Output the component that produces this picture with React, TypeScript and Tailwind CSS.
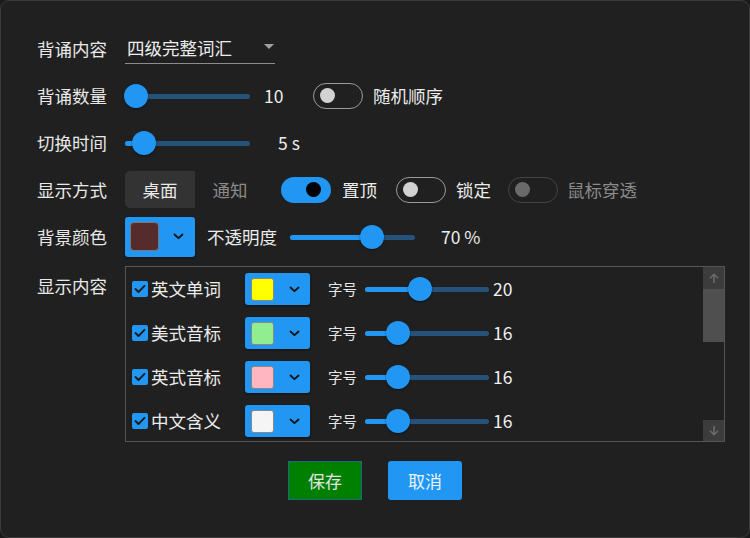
import React from "react";

const font = { fontFamily: '"Noto Sans CJK SC", "Noto Sans", sans-serif' };

interface SliderProp {
    width: number;
    pos: number;
}
const Slider: React.FC<SliderProp> = ({ width, pos }) => {
    return (
        <div className="relative h-[26px] shrink-0" style={{ width }}>
            <div className="absolute left-0 right-0 top-[11px] h-[5px] rounded-full bg-[#24527a]" />
            <div className="absolute left-0 top-[11px] h-[5px] rounded-full bg-[#2196f3]" style={{ width: pos }} />
            <div
                className="absolute top-[1px] h-[24px] w-[24px] rounded-full bg-[#2196f3] shadow-[0_1px_2px_rgba(0,0,0,0.5)]"
                style={{ left: pos - 12 }}
            />
        </div>
    );
};

interface ToggleProp {
    on?: boolean;
    disabled?: boolean;
}
const Toggle: React.FC<ToggleProp> = ({ on = false, disabled = false }) => {
    if (on) {
        return (
            <div className="flex h-[26px] w-[50px] shrink-0 items-center justify-end rounded-full bg-[#2196f3] pr-[10px]">
                <div className="h-[15px] w-[15px] rounded-full bg-black" />
            </div>
        );
    }
    return (
        <div
            className={`flex h-[26px] w-[50px] shrink-0 items-center rounded-full border-[1.5px] pl-[6px] ${
                disabled ? "border-[#444]" : "border-[#9a9a9a]"
            }`}
        >
            <div className={`h-[15px] w-[15px] rounded-full ${disabled ? "bg-[#6a6a6a]" : "bg-[#d2d2d2]"}`} />
        </div>
    );
};

const Chevron = () => (
    <svg width="11" height="7" viewBox="0 0 11 7" fill="none">
        <path d="M1.5 1.5 L5.5 5.2 L9.5 1.5" stroke="#111" strokeWidth="1.8" strokeLinecap="round" strokeLinejoin="round" />
    </svg>
);

interface ItemProp {
    label: string;
    color: string;
    pos: number;
    value: number;
}
const Item: React.FC<ItemProp> = ({ label, color, pos, value }) => {
    return (
        <div className="flex h-[44px] items-center pl-[6px]">
            <div className="flex h-[16px] w-[16px] shrink-0 items-center justify-center rounded-[2px] bg-[#2196f3]">
                <svg width="12" height="10" viewBox="0 0 12 10" fill="none">
                    <path d="M1.5 5 L4.5 8 L10.5 1.8" stroke="#1a1a1a" strokeWidth="1.8" strokeLinecap="round" strokeLinejoin="round" />
                </svg>
            </div>
            <span className="ml-[3px] w-[94px] shrink-0 text-[17.5px] leading-none text-[#ececec]">{label}</span>
            <div className="flex h-[32px] w-[65px] shrink-0 items-center rounded-[3px] bg-[#2196f3] pl-[6px] shadow-[0_1px_2px_rgba(0,0,0,0.5)]">
                <div className="h-[23px] w-[23px] rounded-[3px] border border-[#888]" style={{ backgroundColor: color }} />
                <div className="ml-[15px]">
                    <Chevron />
                </div>
            </div>
            <span className="ml-[18px] w-[37px] shrink-0 text-[14.5px] leading-none text-[#e6e6e6]">字号</span>
            <Slider width={124} pos={pos} />
            <span className="ml-[4px] text-[17.5px] leading-none text-[#f0f0f0]">{value}</span>
        </div>
    );
};

const Label = ({ text }: { text: string }) => (
    <span className="w-[88px] shrink-0 text-[17.5px] leading-none text-[#e8e8e8]">{text}</span>
);

export default function App() {
    return (
        <div className="h-[538px] w-[750px] bg-[#1a1a1a]" style={font}>
            <div className="flex h-[538px] w-[750px] flex-col rounded-[9px] border border-[#3a3a3a] bg-[#202020] pl-[36px] pt-[24px]">
                <div className="flex h-[47px] items-center">
                    <Label text="背诵内容" />
                    <div className="relative flex h-[30px] w-[150px] items-center border-b border-[#8c8c8c] pl-[2px]">
                        <span className="text-[17.5px] leading-none text-[#ececec]">四级完整词汇</span>
                        <svg className="absolute right-[1px] top-[10px]" width="10" height="6" viewBox="0 0 10 6">
                            <path d="M0 0 L10 0 L5 5 Z" fill="#a0a0a0" />
                        </svg>
                    </div>
                </div>
                <div className="flex h-[47px] items-center">
                    <Label text="背诵数量" />
                    <Slider width={125} pos={11} />
                    <span className="ml-[14px] w-[49px] text-[17.5px] leading-none text-[#ececec]">10</span>
                    <Toggle />
                    <span className="ml-[10px] text-[17.5px] leading-none text-[#ececec]">随机顺序</span>
                </div>
                <div className="flex h-[47px] items-center">
                    <Label text="切换时间" />
                    <Slider width={125} pos={19} />
                    <span className="ml-[28px] text-[17.5px] leading-none text-[#ececec]">5 s</span>
                </div>
                <div className="flex h-[47px] items-center">
                    <Label text="显示方式" />
                    <div className="flex h-[37px]">
                        <div className="flex w-[70px] items-center justify-center rounded-l-[5px] bg-[#333333] text-[17.5px] leading-none text-[#e8e8e8]">
                            桌面
                        </div>
                        <div className="flex w-[70px] items-center justify-center text-[17.5px] leading-none text-[#8a8a8a]">
                            通知
                        </div>
                    </div>
                    <div className="ml-[16px]">
                        <Toggle on />
                    </div>
                    <span className="ml-[11px] text-[17.5px] leading-none text-[#ececec]">置顶</span>
                    <div className="ml-[19px]">
                        <Toggle />
                    </div>
                    <span className="ml-[10px] text-[17.5px] leading-none text-[#ececec]">锁定</span>
                    <div className="ml-[17px]">
                        <Toggle disabled />
                    </div>
                    <span className="ml-[9px] text-[17.5px] leading-none text-[#8a8a8a]">鼠标穿透</span>
                </div>
                <div className="flex h-[47px] items-center">
                    <Label text="背景颜色" />
                    <div className="flex h-[40px] w-[70px] items-center rounded-[3px] bg-[#2196f3] pl-[5px] shadow-[0_1px_2px_rgba(0,0,0,0.5)]">
                        <div className="h-[29px] w-[29px] rounded-[4px] border border-[#777] bg-[#562b2c]" />
                        <div className="ml-[14px]">
                            <Chevron />
                        </div>
                    </div>
                    <span className="ml-[12px] w-[83px] text-[17.5px] leading-none text-[#ececec]">不透明度</span>
                    <Slider width={125} pos={82} />
                    <span className="ml-[26px] text-[17.5px] leading-none text-[#ececec]">70 %</span>
                </div>
                <div className="mt-[6px] flex">
                    <div className="flex w-[88px] shrink-0 pt-[11px]">
                        <Label text="显示内容" />
                    </div>
                    <div className="flex h-[176px] w-[600px] shrink-0 border border-[#555]">
                        <div className="flex-1">
                            <Item label="英文单词" color="#ffff00" pos={55} value={20} />
                            <Item label="美式音标" color="#90ee90" pos={33} value={16} />
                            <Item label="英式音标" color="#ffb6c1" pos={33} value={16} />
                            <Item label="中文含义" color="#f5f5f5" pos={33} value={16} />
                        </div>
                        <div className="flex w-[21px] flex-col">
                            <div className="flex h-[22px] items-center justify-center bg-[#3c3c3c]">
                                <svg width="10" height="11" viewBox="0 0 10 11" fill="none">
                                    <path d="M5 10 V1.5 M1 5.2 L5 1.2 L9 5.2" stroke="#6c6c6c" strokeWidth="1.5" />
                                </svg>
                            </div>
                            <div className="h-[53px] bg-[#4f4f4f]" />
                            <div className="flex-1" />
                            <div className="flex h-[21px] items-center justify-center bg-[#3c3c3c]">
                                <svg width="10" height="11" viewBox="0 0 10 11" fill="none">
                                    <path d="M5 1 V9.5 M1 5.8 L5 9.8 L9 5.8" stroke="#6c6c6c" strokeWidth="1.5" />
                                </svg>
                            </div>
                        </div>
                    </div>
                </div>
                <div className="mt-[19px] flex justify-center gap-[26px] pr-[36px]">
                    <button className="flex h-[39px] w-[74px] items-center justify-center border border-[#1c6a80] bg-[#008000] text-[17px] leading-none text-[#e4e4e4]">
                        保存
                    </button>
                    <button className="flex h-[39px] w-[74px] items-center justify-center rounded-[3px] bg-[#2196f3] text-[17px] leading-none text-[#eef4fa]">
                        取消
                    </button>
                </div>
            </div>
        </div>
    );
}
